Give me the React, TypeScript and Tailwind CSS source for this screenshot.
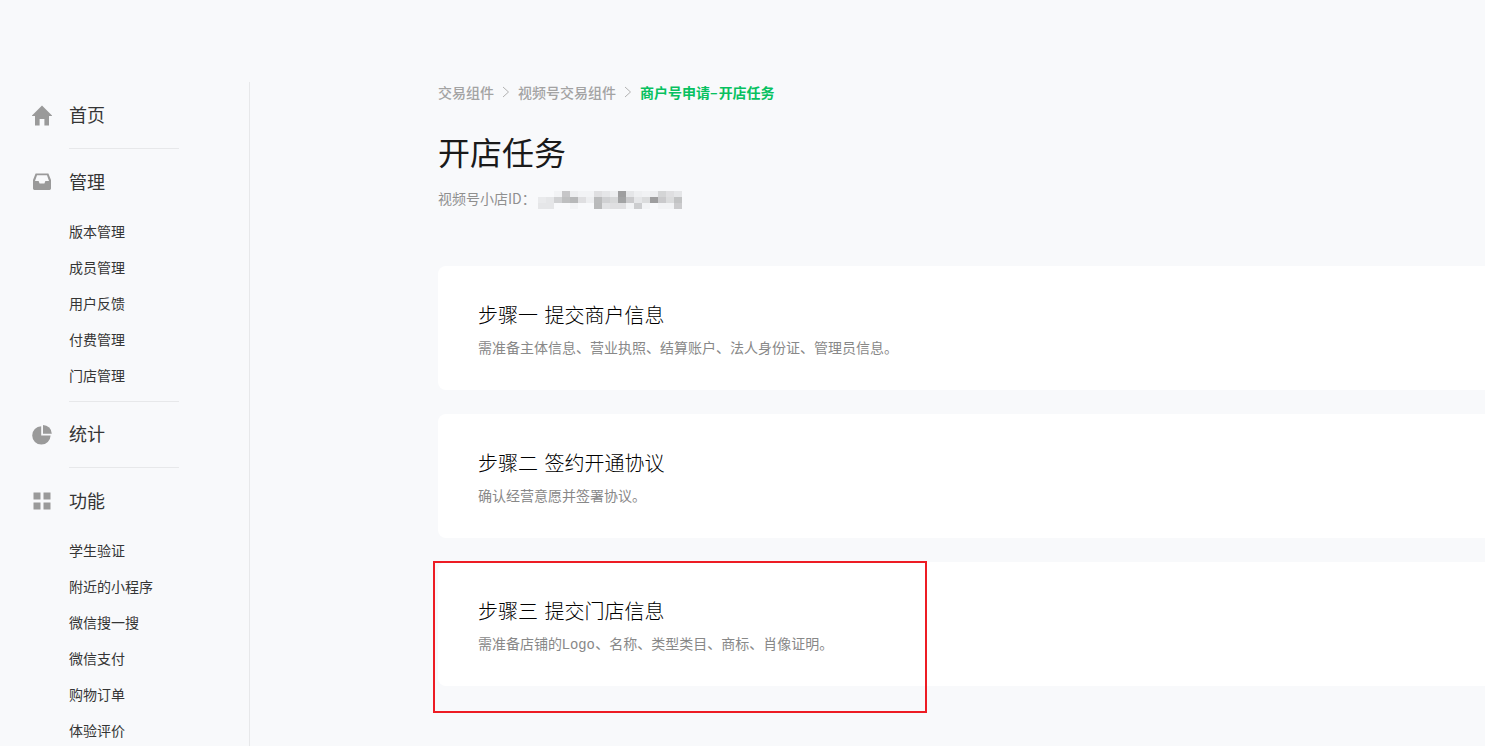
function HomeIcon() {
  return (
    <svg width="22" height="21" viewBox="0 0 22 21" className="shrink-0">
      <path d="M11 0.5 L21 10.6 L21 11 L18 11 L18 20.5 L13.4 20.5 L13.4 14 L8.6 14 L8.6 20.5 L4 20.5 L4 11 L1 11 L1 10.6 Z" fill="#9a9a9a" />
    </svg>
  );
}
function InboxIcon() {
  return (
    <svg width="20" height="18" viewBox="0 0 20 18" className="shrink-0">
      <path fillRule="evenodd" d="M3.6 0.5 H16.4 L19 7 V15.6 Q19 17 17.6 17 H2.4 Q1 17 1 15.6 V7 Z M5 2.2 L3 8 H6.6 L7.6 10.4 H12.4 L13.4 8 H17 L15 2.2 Z" fill="#9a9a9a" />
    </svg>
  );
}
function PieIcon() {
  return (
    <svg width="20" height="20" viewBox="0 0 20 20" className="shrink-0">
      <path d="M9.2 1.2 V10.6 H18.6 A9.2 9.2 0 1 1 9.2 1.2 Z" fill="#9a9a9a" />
      <path d="M11 0 A8.8 8.8 0 0 1 19.8 8.8 H11 Z" fill="#9a9a9a" />
    </svg>
  );
}
function GridIcon() {
  return (
    <svg width="18" height="18" viewBox="0 0 18 18" className="shrink-0">
      <rect x="0.5" y="0.5" width="7" height="7" fill="#9a9a9a" />
      <rect x="10.5" y="0.5" width="7" height="7" fill="#9a9a9a" />
      <rect x="0.5" y="10.5" width="7" height="7" fill="#9a9a9a" />
      <rect x="10.5" y="10.5" width="7" height="7" fill="#9a9a9a" />
    </svg>
  );
}
function Chevron() {
  return (
    <svg width="8" height="12" viewBox="0 0 8 12" className="shrink-0">
      <path d="M1 1 L6.5 6 L1 11" fill="none" stroke="#b2b2b2" strokeWidth="1" />
    </svg>
  );
}

function NavRow({ icon, label, short }: { icon: React.ReactNode; label: string; short?: boolean }) {
  return (
    <div className={short ? "flex h-[65px] items-center" : "flex h-[66px] items-center"}>
      <div className="flex w-[69px] shrink-0 justify-center pl-[15px]">{icon}</div>
      <span className="mb-[2px] text-[18px] text-[#353535]">{label}</span>
    </div>
  );
}
function SubRow({ label }: { label: string }) {
  return <div className="flex h-9 items-center pb-[2px] pl-[69px] text-[14px] text-[#353535]">{label}</div>;
}
function Divider() {
  return <div className="ml-[69px] h-px w-[110px] bg-[#e7e8ea]" />;
}

function Card({ title, desc }: { title: string; desc: React.ReactNode }) {
  return (
    <div className="h-[124px] w-[1200px] rounded-lg bg-white pl-10 pt-[35px]">
      <div className="text-[20px] font-light leading-7 text-black [word-spacing:2px]">{title}</div>
      <div className="mt-[7px] font-['Liberation_Sans','Noto_Sans_CJK_SC',sans-serif] text-[14px] leading-6 text-[#888888]">{desc}</div>
    </div>
  );
}

const mosaic = [
  [0, 0, 3, 28, 6, 3, 3, 14, 10, 6, 50, 10, 5, 4, 6, 20, 14, 10],
  [8, 10, 22, 32, 36, 14, 6, 34, 22, 18, 48, 26, 10, 16, 50, 26, 16, 30],
  [10, 10, 0, 0, 3, 0, 0, 35, 12, 14, 14, 3, 24, 3, 0, 3, 3, 25],
];

function Blur() {
  return (
    <svg width="144" height="18" viewBox="0 0 144 18" className="ml-[2px] mt-[4px] shrink-0">
      {mosaic.map((row, r) =>
        row.map((v, c) => (
          <rect key={`${r}-${c}`} x={c * 8} y={r * 6} width="8" height="6" fill="#444444" fillOpacity={v / 100} />
        ))
      )}
    </svg>
  );
}

export default function App() {
  return (
    <div className="relative h-[746px] overflow-hidden bg-[#f8f9fb] pt-[82px] font-['Noto_Sans_CJK_SC','Noto_Sans',sans-serif]">
      <div className="flex">
        <aside className="h-[664px] w-[250px] shrink-0 border-r border-[#e7e8ea]">
          <NavRow icon={<HomeIcon />} label="首页" />
          <Divider />
          <NavRow icon={<InboxIcon />} label="管理" />
          <div className="-mt-px pb-[7px]">
            {["版本管理", "成员管理", "用户反馈", "付费管理", "门店管理"].map((t) => (
              <SubRow key={t} label={t} />
            ))}
          </div>
          <Divider />
          <NavRow short icon={<PieIcon />} label="统计" />
          <Divider />
          <NavRow icon={<GridIcon />} label="功能" />
          <div className="-mt-px">
            {["学生验证", "附近的小程序", "微信搜一搜", "微信支付", "购物订单", "体验评价"].map((t) => (
              <SubRow key={t} label={t} />
            ))}
          </div>
        </aside>
        <main className="min-w-0 flex-1 pl-[188px]">
          <nav className="flex h-[20px] items-center text-[14px] font-medium leading-[20px] text-[#a3a3a3]">
            <span>交易组件</span>
            <span className="mx-[8px]"><Chevron /></span>
            <span>视频号交易组件</span>
            <span className="mx-[8px]"><Chevron /></span>
            <span className="font-bold text-[#07c160]">商户号申请<span className="pr-px">–</span>开店任务</span>
          </nav>
          <h1 className="mt-[25px] text-[32px] font-normal leading-[48px] text-[#1a1a1a]">开店任务</h1>
          <div className="mt-[13px] flex h-5 items-center text-[14px] text-[#8f8f8f]">
            <span>视频号小店ID：</span>
            <Blur />
          </div>
          <div className="mt-[58px] flex flex-col gap-6">
            <Card title="步骤一 提交商户信息" desc="需准备主体信息、营业执照、结算账户、法人身份证、管理员信息。" />
            <Card title="步骤二 签约开通协议" desc="确认经营意愿并签署协议。" />
            <Card
              title="步骤三 提交门店信息"
              desc={<>需准备店铺的<span className="tracking-[0.5px]">Logo</span>、名称、类型类目、商标、肖像证明。</>}
            />
          </div>
        </main>
      </div>
      <div className="absolute left-[433px] top-[561px] h-[152px] w-[494px] border-2 border-[#ed1c24]" />
    </div>
  );
}
